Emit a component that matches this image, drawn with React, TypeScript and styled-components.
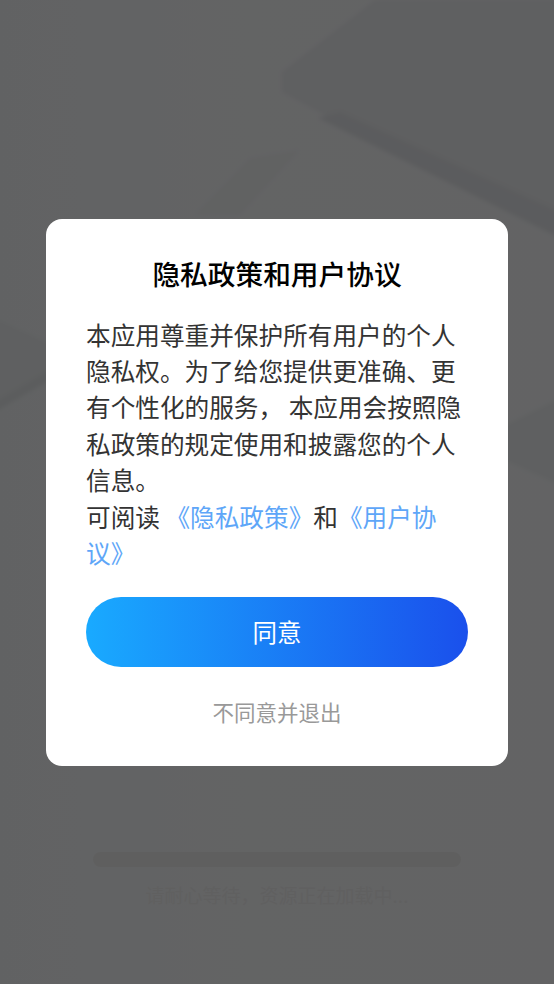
import React from "react";
import styled, { createGlobalStyle } from "styled-components";

const GlobalStyle = createGlobalStyle`
  html, body {
    margin: 0;
    padding: 0;
    background: #f8f9fa;
  }
  * {
    box-sizing: border-box;
  }
`;

const BackgroundArt = () => (
  <ArtSvg viewBox="0 0 554 984" aria-hidden="true">
    <defs>
      <filter id="soft" x="-10%" y="-10%" width="120%" height="120%">
        <feGaussianBlur stdDeviation="2" />
      </filter>
    </defs>
    <g filter="url(#soft)">
      <path d="M282 72 L375 0 L560 0 L560 232 L330 118 L282 92 Z" fill="#edeff2" />
      <path d="M318 118 L340 112 L560 212 L560 238 Z" fill="#e4e6ea" />
      <path d="M195 215 L250 158 L300 150 L240 215 Z" fill="#f2f4f5" />
      <path d="M-5 318 L50 344 L50 372 L-5 407 Z" fill="#edf0f2" />
      <path d="M-5 402 L50 370 L50 380 L-5 412 Z" fill="#e5e8ea" />
      <path d="M500 428 L560 398 L560 485 L500 458 Z" fill="#edf0f2" />
    </g>
  </ArtSvg>
);

export default function App() {
  return (
    <>
      <GlobalStyle />
      <Page>
        <BackgroundArt />
        <Loading>
          <LoadingTrack />
          <LoadingText>请耐心等待，资源正在加载中...</LoadingText>
        </Loading>
        <Overlay>
          <Dialog>
            <Title>隐私政策和用户协议</Title>
            <Body>
              本应用尊重并保护所有用户的个人隐私权。为了给您提供更准确、更有个性化的服务， 本应用会按照隐私政策的规定使用和披露您的个人信息。
              <br />
              可阅读 <Link>《隐私政策》</Link>和<Link>《用户协议》</Link>
            </Body>
            <AgreeButton>同意</AgreeButton>
            <RefuseButton>不同意并退出</RefuseButton>
          </Dialog>
        </Overlay>
      </Page>
    </>
  );
}

const Page = styled.div`
  position: relative;
  width: 554px;
  height: 984px;
  overflow: hidden;
  background: linear-gradient(90deg, #f3f6f8, #f8f9fb 45%, #f7f8fa);
  font-family: "Noto Sans CJK SC", "Noto Sans", sans-serif;
  display: flex;
  flex-direction: column;
  justify-content: flex-end;
`;

const ArtSvg = styled.svg`
  position: absolute;
  inset: 0;
  width: 554px;
  height: 984px;
`;

const Loading = styled.div`
  position: relative;
  padding: 0 93px 76px;
  display: flex;
  flex-direction: column;
  align-items: center;
`;

const LoadingTrack = styled.div`
  width: 368px;
  height: 15px;
  border-radius: 8px;
  background: #eeeeee;
`;

const LoadingText = styled.div`
  margin-top: 15px;
  font-size: 19px;
  line-height: 26px;
  color: #f0f0f0;
  white-space: nowrap;
`;

const Overlay = styled.div`
  position: absolute;
  inset: 0;
  background: rgba(0, 0, 0, 0.6);
  display: flex;
  justify-content: center;
  padding-top: 219px;
`;

const Dialog = styled.div`
  width: 462px;
  height: 547px;
  padding: 34px 40px 0;
  background: #ffffff;
  border-radius: 16px;
  display: flex;
  flex-direction: column;
`;

const Title = styled.h1`
  margin: 0;
  font-size: 27.7px;
  line-height: 40px;
  font-weight: 500;
  text-align: center;
  color: #000000;
`;

const Body = styled.p`
  margin: 22.5px 0 0;
  font-size: 24.65px;
  line-height: 36.4px;
  color: #333333;
`;

const Link = styled.span`
  color: #5ea6f8;
`;

const AgreeButton = styled.button`
  margin-top: 26.5px;
  height: 70px;
  flex-shrink: 0;
  border: none;
  border-radius: 35px;
  background: linear-gradient(90deg, #19aaff, #1a50ec);
  color: #ffffff;
  font-family: inherit;
  font-size: 24.5px;
`;

const RefuseButton = styled.button`
  margin-top: 27px;
  padding: 0;
  border: none;
  background: none;
  color: #999999;
  font-family: inherit;
  font-size: 21.5px;
  line-height: 36px;
`;
